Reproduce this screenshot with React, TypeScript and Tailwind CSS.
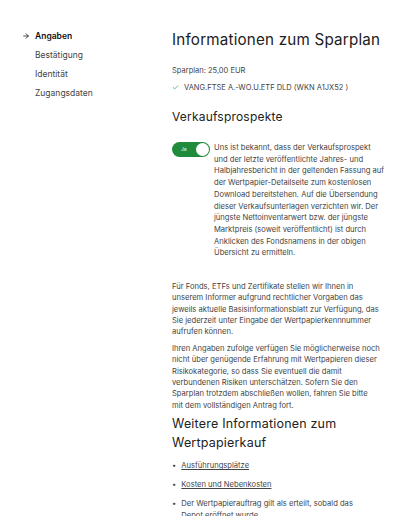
import * as React from "react"
import { ArrowRight, Check } from "lucide-react"

const steps = [
  { label: "Angaben", active: true },
  { label: "Bestätigung", active: false },
  { label: "Identität", active: false },
  { label: "Zugangsdaten", active: false },
]

export default function App() {
  return (
    <div className="flex w-[400px] h-[516px] overflow-hidden bg-white text-[#333] font-['Inter',sans-serif]">
      {/* Steps */}
      <nav className="w-[172px] shrink-0 pt-[30px] pl-[22px]">
        <ul className="flex flex-col gap-[7px] text-[8.5px]">
          {steps.map((step) => (
            <li key={step.label} className="flex items-center h-[12px]">
              <span className="w-[13px]">
                {step.active && <ArrowRight className="w-[8px] h-[8px] text-[#222]" strokeWidth={2.5} />}
              </span>
              <span className={step.active ? "font-semibold text-[#111]" : "text-[#444]"}>{step.label}</span>
            </li>
          ))}
        </ul>
      </nav>

      {/* Content */}
      <main className="w-[214px] shrink-0 min-w-0 pt-[29px]">
        <h1 className="text-[15.2px] leading-[22px] text-[#222] whitespace-nowrap tracking-[0.2px]">
          Informationen zum Sparplan
        </h1>
        <p className="mt-[13.5px] text-[7.5px] leading-[11px] text-[#444]">Sparplan: 25,00 EUR</p>
        <p className="mt-[6px] flex items-center gap-[5px] text-[7.5px] leading-[11px] text-[#444]">
          <Check className="w-[7px] h-[7px] text-[#2c9a4a]" strokeWidth={2.5} />
          VANG.FTSE A.-WO.U.ETF DLD (WKN A1JX52 )
        </p>

        <h2 className="mt-[16.5px] text-[12px] leading-[16px] text-[#222] tracking-[0.2px]">Verkaufsprospekte</h2>

        <div className="mt-[17px] flex items-start gap-[4px]">
          <div className="shrink-0 flex items-center w-[38px] h-[15px] rounded-full bg-[#1f8b3b] pl-[9px] pr-[1px]">
            <span className="text-[5px] text-white flex-1">Ja</span>
            <span className="w-[13px] h-[13px] rounded-full bg-white"></span>
          </div>
          <p className="text-[7.6px] leading-[11.7px] text-[#444]">
            Uns ist bekannt, dass der Verkaufsprospekt und der letzte veröffentlichte Jahres- und
            Halbjahresbericht in der geltenden Fassung auf der Wertpapier-Detailseite zum kostenlosen
            Download bereitstehen. Auf die Übersendung dieser Verkaufsunterlagen verzichten wir. Der
            jüngste Nettoinventarwert bzw. der jüngste Marktpreis (soweit veröffentlicht) ist durch
            Anklicken des Fondsnamens in der obigen Übersicht zu ermitteln.
          </p>
        </div>

        <p className="mt-[22px] text-[7.6px] leading-[11.3px] text-[#444]">
          Für Fonds, ETFs und Zertifikate stellen wir Ihnen in unserem Informer aufgrund rechtlicher
          Vorgaben das jeweils aktuelle Basisinformationsblatt zur Verfügung, das Sie jederzeit unter
          Eingabe der Wertpapierkennnummer aufrufen können.
        </p>
        <p className="mt-[5.5px] text-[7.6px] leading-[11.3px] text-[#444]">
          Ihren Angaben zufolge verfügen Sie möglicherweise noch nicht über genügende Erfahrung mit
          Wertpapieren dieser Risikokategorie, so dass Sie eventuell die damit verbundenen Risiken
          unterschätzen. Sofern Sie den Sparplan trotzdem abschließen wollen, fahren Sie bitte mit&nbsp;dem
          vollständigen Antrag fort.
        </p>

        <h2 className="mt-[3.5px] text-[12.5px] leading-[19px] text-[#222] tracking-[0.2px]">
          Weitere Informationen zum Wertpapierkauf
        </h2>

        <ul className="mt-[8px] pr-[16px] flex flex-col gap-[7.7px] text-[7.6px] leading-[11.3px] text-[#444]">
          <li className="flex gap-[5px]">
            <span>•</span>
            <span className="underline">Ausführungsplätze</span>
          </li>
          <li className="flex gap-[5px]">
            <span>•</span>
            <span className="underline">Kosten und Nebenkosten</span>
          </li>
          <li className="flex gap-[5px]">
            <span>•</span>
            <span>Der Wertpapierauftrag gilt als erteilt, sobald das Depot eröffnet wurde.</span>
          </li>
        </ul>
      </main>
    </div>
  )
}
